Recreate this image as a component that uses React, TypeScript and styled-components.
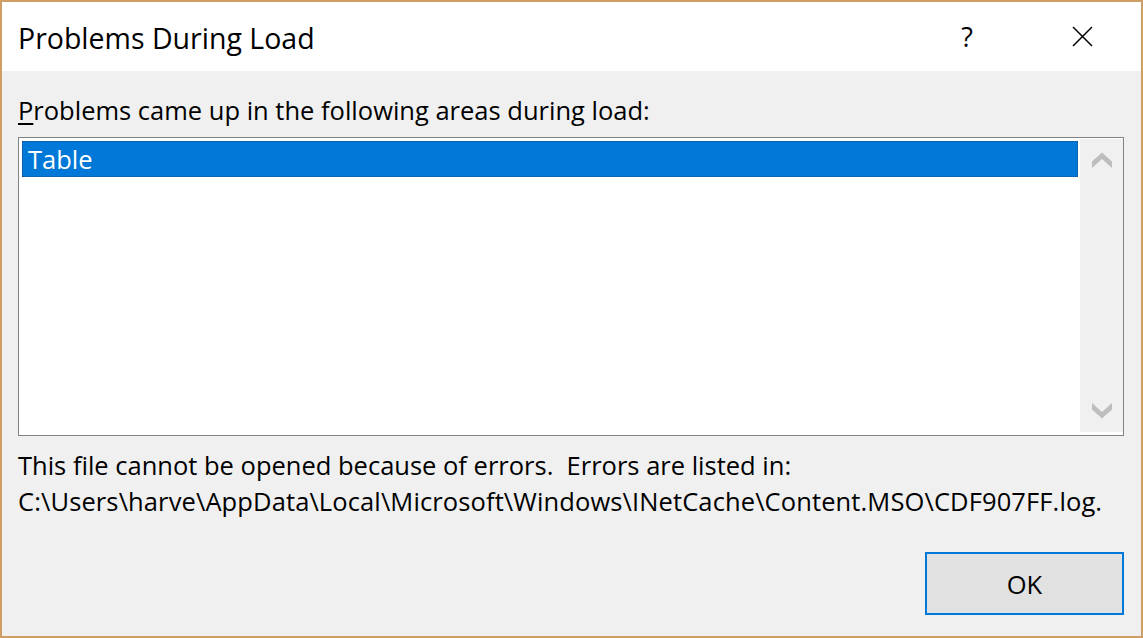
import React from "react";
import styled, { createGlobalStyle } from "styled-components";

const GlobalStyle = createGlobalStyle`
  html, body {
    margin: 0;
    padding: 0;
    background: #f0f0f0;
  }
  * { box-sizing: border-box; }
`;

const Window = styled.div`
  width: 1143px;
  height: 638px;
  border: 2px solid #cf9e65;
  display: flex;
  flex-direction: column;
  font-family: "Open Sans", "Noto Sans", sans-serif;
  color: #000;
  background: #f0f0f0;
  overflow: hidden;
`;

const TitleBar = styled.div`
  height: 69px;
  flex: none;
  background: #ffffff;
  display: flex;
  align-items: center;
  padding-left: 16px;
`;

const Title = styled.div`
  font-size: 28.5px;
  line-height: 38px;
  margin-top: 3px;
  flex: 1;
`;

const CaptionButton = styled.div<{ $w: number }>`
  width: ${(p) => p.$w}px;
  height: 69px;
  display: flex;
  align-items: center;
  justify-content: center;
  font-size: 27px;
  line-height: 30px;
`;

const CaptionGroup = styled.div`
  display: flex;
  align-items: center;
  padding-right: 29px;
  gap: 55px;
`;

const Body = styled.div`
  flex: 1;
  display: flex;
  flex-direction: column;
  padding: 21px 17px 21px 16px;
  font-size: 25.5px;
  line-height: 36px;
`;

const Label = styled.div`
  height: 36px;
  white-space: pre;
  u {
    text-decoration-thickness: 2px;
    text-underline-offset: 3px;
  }
`;

const ListBox = styled.div`
  margin-top: 9px;
  height: 299px;
  border: 1px solid #828282;
  background: #ffffff;
  display: flex;
  padding: 1px 0 3px 0;
`;

const List = styled.div`
  flex: 1;
  padding: 2px 2px 0 3px;
`;

const Row = styled.div<{ $selected?: boolean }>`
  height: 36px;
  padding-left: 5px;
  line-height: 34px;
  background: ${(p) => (p.$selected ? "#0078d7" : "transparent")};
  color: ${(p) => (p.$selected ? "#ffffff" : "#000000")};
  border: 1px dotted ${(p) => (p.$selected ? "#1c4f85" : "transparent")};
`;

const ScrollBar = styled.div`
  width: 43px;
  background: #f0f0f0;
  display: flex;
  flex-direction: column;
  justify-content: space-between;
`;

const ArrowButton = styled.div`
  height: 42px;
  display: flex;
  align-items: center;
  justify-content: center;
`;

const Message = styled.div`
  margin-top: 11px;
`;

const MessageLine = styled.div<{ $spacing?: number }>`
  white-space: pre;
  letter-spacing: ${(p) => p.$spacing ?? 0}px;
`;

const Footer = styled.div`
  margin-top: auto;
  display: flex;
  justify-content: flex-end;
`;

const OkButton = styled.div`
  width: 199px;
  height: 63px;
  border: 2px solid #0078d7;
  background: #e1e1e1;
  display: flex;
  align-items: center;
  justify-content: center;
  font-size: 25.5px;
`;

const Chevron = ({ down }: { down?: boolean }) => (
  <svg width="20" height="16" viewBox="0 0 20 16">
    <path
      d={down ? "M0 0 L10 9 L20 0 L20 6.5 L10 15.5 L0 6.5 Z" : "M0 9.5 L10 0.5 L20 9.5 L20 16 L10 7 L0 16 Z"}
      fill="#bdbdbd"
    />
  </svg>
);

const CloseIcon = () => (
  <svg width="21" height="21" viewBox="0 0 21 21">
    <path d="M1 1 L20 20 M20 1 L1 20" stroke="#000" strokeWidth="1.5" fill="none" />
  </svg>
);

export default function App() {
  return (
    <>
      <GlobalStyle />
      <Window>
        <TitleBar>
          <Title>Problems During Load</Title>
          <CaptionGroup>
            <CaptionButton $w={60}>?</CaptionButton>
            <CaptionButton $w={60}>
              <CloseIcon />
            </CaptionButton>
          </CaptionGroup>
        </TitleBar>
        <Body>
          <Label>
            <u>P</u>roblems came up in the following areas during load:
          </Label>
          <ListBox>
            <List>
              <Row $selected>Table</Row>
            </List>
            <ScrollBar>
              <ArrowButton>
                <Chevron />
              </ArrowButton>
              <ArrowButton>
                <Chevron down />
              </ArrowButton>
            </ScrollBar>
          </ListBox>
          <Message>
            <MessageLine>{"This file cannot be opened because of errors.  Errors are listed in:"}</MessageLine>
            <MessageLine $spacing={0.11}>
              {"C:\\Users\\harve\\AppData\\Local\\Microsoft\\Windows\\INetCache\\Content.MSO\\CDF907FF.log."}
            </MessageLine>
          </Message>
          <Footer>
            <OkButton>OK</OkButton>
          </Footer>
        </Body>
      </Window>
    </>
  );
}
